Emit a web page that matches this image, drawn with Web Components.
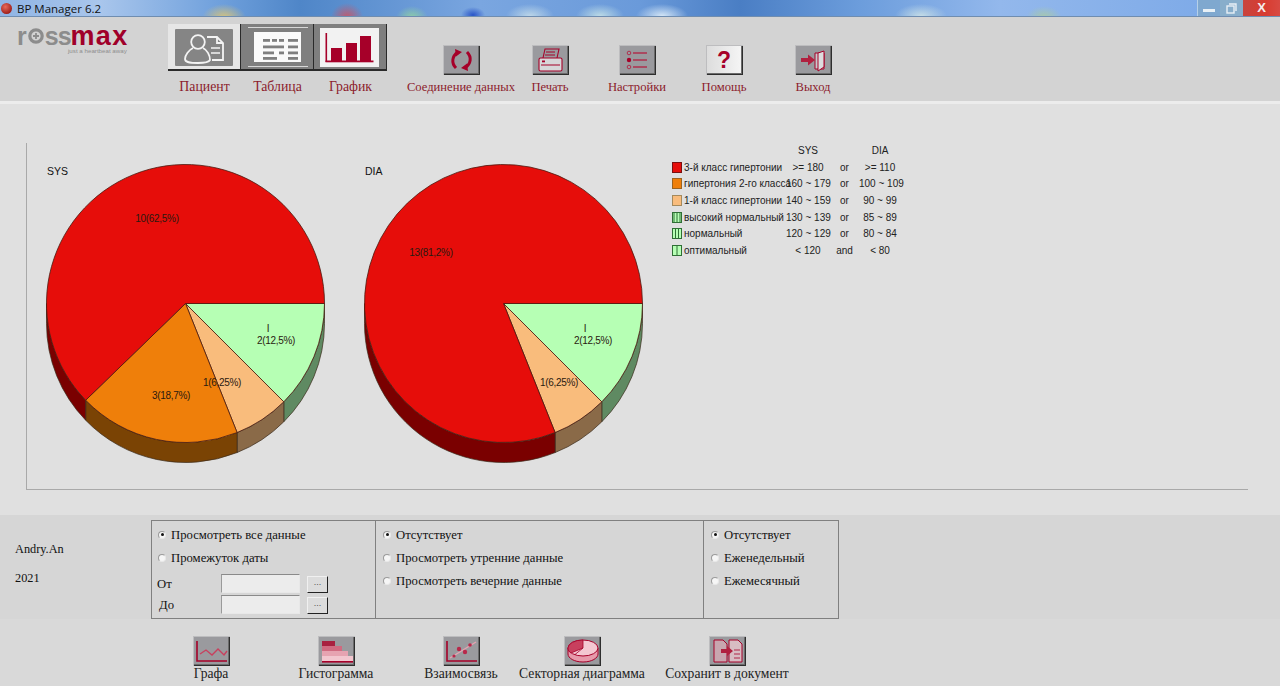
<!DOCTYPE html>
<html lang="ru">
<head>
<meta charset="utf-8">
<title>BP Manager 6.2</title>
<style>
  html, body { margin: 0; height: 100%; overflow: hidden; background: #e0e0e0; }
  bp-app { font-family: "Liberation Serif", "Times New Roman", serif; }
  .low { margin-left: 2px; }
</style>
</head>
<body>

<bp-app>
  <bp-titlebar slot="title">BP Manager 6.2</bp-titlebar>

  <bp-toolbar slot="toolbar">
    <bp-logo slot="logo"></bp-logo>

    <bp-tool big style="--w:73px">
      <svg slot="icon" viewBox="0 0 72 47" width="72" height="47">
        <rect width="72" height="47" fill="#e6e6e6"/>
        <rect x="7" y="5" width="58" height="37" rx="1" fill="#858585"/>
        <g fill="none" stroke="#f4f4f4" stroke-width="1.8">
          <circle cx="30" cy="18" r="6.8"/>
          <path d="M25 24c-4 2-8 7-8 11 0 3 3 4 13 4 7 0 11-1 12-3 0-5-3-10-7-12"/>
          <path d="M39 13h10l6 6v17H44"/>
          <path d="M49 13v6h6"/>
          <path d="M43 24h9M43 29h9" stroke-width="1.4"/>
        </g>
      </svg>
      Пациент
    </bp-tool>
    <bp-tool big style="--w:73px">
      <svg slot="icon" viewBox="0 0 72 47" width="72" height="47">
        <rect width="72" height="47" fill="#7f7f7f"/>
        <path d="M7 3.500h60M7 42.500h60" stroke="#d8d8d8" stroke-width="1"/>
        <rect x="13" y="8" width="47" height="30" fill="#fafafa"/>
        <g fill="#7f7f7f">
          <rect x="22" y="15" width="7" height="2.800"/><rect x="31" y="15" width="5" height="2.800"/><rect x="38" y="15" width="5" height="2.800"/><rect x="47" y="15" width="10" height="2.800"/>
          <rect x="22" y="21.500" width="21" height="2.800"/><rect x="47" y="21.500" width="10" height="2.800"/>
          <rect x="22" y="27.500" width="11" height="2.800"/><rect x="38" y="27.500" width="5" height="2.800"/><rect x="47" y="27.500" width="10" height="2.800"/>
          <rect x="22" y="33" width="14" height="2.800"/><rect x="47" y="33" width="10" height="2.800"/>
        </g>
      </svg>
      Таблица
    </bp-tool>
    <bp-tool big style="--w:73px">
      <svg slot="icon" viewBox="0 0 72 47" width="72" height="47">
        <rect width="72" height="47" fill="#7f7f7f"/>
        <rect x="6" y="4" width="59" height="39" fill="#f2f2f2"/>
        <g fill="#a60029">
          <rect x="11.500" y="9" width="1.600" height="29"/>
          <rect x="11.500" y="36.500" width="48" height="1.800"/>
          <rect x="17" y="24" width="11" height="13"/>
          <rect x="32" y="19" width="11" height="18"/>
          <rect x="46" y="12" width="11" height="25"/>
        </g>
      </svg>
      График
    </bp-tool>

    <bp-tool style="--w:110px;margin-left:19px">
      <svg slot="icon" viewBox="0 0 37 30" width="37" height="30">
        <g fill="none" stroke="#a60029" stroke-width="3">
          <path d="M13 23c-5-5-4-12 2-16"/>
          <path d="M24 7c5 5 4 12-2 16"/>
        </g>
        <path d="M12 4l7 3-6 4.500zM25 26l-7-3 6-4.500z" fill="#a60029"/>
      </svg>
      Соединение данных
    </bp-tool>
    <bp-tool style="--w:68px">
      <svg slot="icon" viewBox="0 0 37 30" width="37" height="30">
        <g fill="none" stroke="#a60029" stroke-width="1.100">
          <path d="M11 13l2-9h14l-2 9"/>
          <rect x="7" y="13" width="23" height="13" rx="1.500" fill="#d7d7d9"/>
          <path d="M9 20h19M14 7h9M13 10h10"/>
        </g>
        <rect x="10" y="15.500" width="3" height="1.800" fill="#a60029"/>
      </svg>
      Печать
    </bp-tool>
    <bp-tool style="--w:106px">
      <svg slot="icon" viewBox="0 0 37 30" width="37" height="30">
        <g fill="none" stroke="#b0304e" stroke-width="1.400">
          <circle cx="10" cy="8" r="1.800" stroke-width="1"/>
          <circle cx="10" cy="22" r="1.800" stroke-width="1"/>
          <path d="M14 8h14M14 15h14M14 22h14"/>
        </g>
        <circle cx="10" cy="15" r="2.200" fill="#a60029"/>
      </svg>
      Настройки
    </bp-tool>
    <bp-tool light style="--w:68px">
      <span slot="icon" style="display:block;font:bold 23px/30px 'Liberation Sans',sans-serif;color:#a60029;text-align:center">?</span>
      Помощь
    </bp-tool>
    <bp-tool style="--w:110px">
      <svg slot="icon" viewBox="0 0 37 30" width="37" height="30">
        <path d="M20 8h9v16h-9z" fill="#c9c9cc" stroke="#a60029" stroke-width="1"/>
        <path d="M23 8l6-2v16l-6 4z" fill="#dcdcde" stroke="#a60029" stroke-width="1"/>
        <path d="M6 13h7V9.500l7 5.500-7 5.500V17H6z" fill="#b0203f"/>
      </svg>
      Выход
    </bp-tool>
  </bp-toolbar>

  <bp-chart slot="chart">
    <bp-pie name="SYS" slices='[
      {"deg":45,"fill":"#b6ffb4","side":"#5f8a62"},
      {"deg":23.2,"fill":"#f9bc7c","side":"#8a6a48"},
      {"deg":67.7,"fill":"#ef7f0a","side":"#7a4304"},
      {"deg":224.1,"fill":"#e60d0a","side":"#7a0000"}]'
      labels='[[130,75,"10(62,5%)"],[144,252,"3(18,7%)"],[195,239,"1(6,25%)"],[241,185,"I"],[249,197,"2(12,5%)"]]'></bp-pie>
    <bp-pie name="DIA" slices='[
      {"deg":45,"fill":"#b6ffb4","side":"#5f8a62"},
      {"deg":23.2,"fill":"#f9bc7c","side":"#8a6a48"},
      {"deg":291.8,"fill":"#e60d0a","side":"#7a0000"}]'
      labels='[[86,109,"13(81,2%)"],[214,239,"1(6,25%)"],[240,185,"I"],[248,197,"2(12,5%)"]]'></bp-pie>
    <bp-legend>
      <bp-legend-row sys="SYS" dia="DIA"></bp-legend-row>
      <bp-legend-row fill="#e60d0a" edge="#7a1010" sys="&gt;= 180" op="or" dia="&gt;= 110">3-й класс гипертонии</bp-legend-row>
      <bp-legend-row fill="#ef7f0a" edge="#9c6320" sys="160 ~ 179" op="or" dia="100 ~ 109">гипертония 2-го класса</bp-legend-row>
      <bp-legend-row fill="#f9bc7c" edge="#a58a5c" sys="140 ~ 159" op="or" dia="90 ~ 99">1-й класс гипертонии</bp-legend-row>
      <bp-legend-row fill="#b6ffb4" edge="#2f6f35" bars="3" sys="130 ~ 139" op="or" dia="85 ~ 89">высокий нормальный</bp-legend-row>
      <bp-legend-row fill="#b6ffb4" edge="#2f6f35" bars="2" sys="120 ~ 129" op="or" dia="80 ~ 84">нормальный</bp-legend-row>
      <bp-legend-row fill="#b6ffb4" edge="#2f6f35" bars="1" sys="&lt; 120" op="and" dia="&lt; 80">оптимальный</bp-legend-row>
    </bp-legend>
  </bp-chart>

  <bp-filters slot="filters">
    <span slot="user">Andry.An</span>
    <span slot="year">2021</span>
    <bp-group style="--w:224px;--pad:6px" slot="range">
      <bp-radio checked>Просмотреть все данные</bp-radio>
      <bp-radio>Промежуток даты</bp-radio>
      <bp-date-row first>От</bp-date-row>
      <bp-date-row><span class="low">До</span></bp-date-row>
    </bp-group>
    <bp-group style="--w:328px" slot="time">
      <bp-radio checked>Отсутствует</bp-radio>
      <bp-radio>Просмотреть утренние данные</bp-radio>
      <bp-radio>Просмотреть вечерние данные</bp-radio>
    </bp-group>
    <bp-group style="--w:134px" slot="period">
      <bp-radio checked>Отсутствует</bp-radio>
      <bp-radio>Еженедельный</bp-radio>
      <bp-radio>Ежемесячный</bp-radio>
    </bp-group>
  </bp-filters>

  <bp-actions slot="actions">
    <bp-tool action style="--w:124px">
      <svg slot="icon" viewBox="0 0 37 30" width="37" height="30">
        <path d="M4 5v20h30" fill="none" stroke="#a60029" stroke-width="1.600"/>
        <path d="M7 18l6-4 6 5 6-6 6 6 3-4" fill="none" stroke="#c8405e" stroke-width="1.400"/>
      </svg>
      Графа
    </bp-tool>
    <bp-tool action style="--w:126px">
      <svg slot="icon" viewBox="0 0 37 30" width="37" height="30">
        <rect x="4" y="5" width="13" height="5" fill="#a8203f"/>
        <rect x="4" y="10" width="20" height="5" fill="#d06a80"/>
        <rect x="4" y="15" width="26" height="5" fill="#e6a3b1"/>
        <rect x="4" y="20" width="31" height="5" fill="#f2c6cf"/>
        <rect x="4" y="25" width="31" height="1.600" fill="#a60029"/>
      </svg>
      Гистограмма
    </bp-tool>
    <bp-tool action style="--w:124px">
      <svg slot="icon" viewBox="0 0 37 30" width="37" height="30">
        <path d="M4 5v20h30" fill="none" stroke="#a60029" stroke-width="1.600"/>
        <path d="M7 22L33 6" stroke="#e6a3b1" stroke-width="1.400"/>
        <g fill="#b8284a"><circle cx="11" cy="20" r="1.600"/><circle cx="16" cy="13" r="2.200"/><circle cx="22" cy="16" r="2.200"/><circle cx="27" cy="9" r="1.800"/></g>
      </svg>
      Взаимосвязь
    </bp-tool>
    <bp-tool action style="--w:118px">
      <svg slot="icon" viewBox="0 0 37 30" width="37" height="30">
        <path d="M4 12v6c0 4 6 8 15 8s15-4 15-8v-6z" fill="#e79aab" stroke="#a60029" stroke-width="1"/>
        <ellipse cx="19" cy="12" rx="15" ry="8" fill="#f4c8d2" stroke="#a60029" stroke-width="1"/>
        <path d="M19 12V4a15 8 0 0 0-15 8c0 2 1 4 3 5z" fill="#c8405e" stroke="#a60029" stroke-width=".8"/>
        <path d="M19 12l-8 6.500" stroke="#a60029" stroke-width=".8"/>
      </svg>
      Секторная диаграмма
    </bp-tool>
    <bp-tool action style="--w:172px">
      <svg slot="icon" viewBox="0 0 37 30" width="37" height="30">
        <path d="M5 4h9l4 4v18H5z" fill="#c8a6af" stroke="#a60029" stroke-width="1"/>
        <path d="M20 4h9l4 4v18H20z" fill="#d8bcc3" stroke="#a60029" stroke-width="1"/>
        <path d="M25 14h6M25 18h6M25 22h6" stroke="#a60029" stroke-width=".8"/>
        <path d="M12 13h6v-3l6 5-6 5v-3h-6z" fill="#b0203f"/>
      </svg>
      Сохранит в документ
    </bp-tool>
  </bp-actions>
</bp-app>

<script>
// Small helper so that each class stays short
function shadow(el, html) {
  el.attachShadow({mode: 'open'}).innerHTML = html;
}

// Page shell: stacks the bars from top to bottom
class BpApp extends HTMLElement {
  constructor() {
    super();
    shadow(this, `
      <style>
        :host { display: flex; flex-direction: column; height: 686px; width: 1280px; }
        .band { height: 3px; background: #ececec; flex: none; }
      </style>
      <slot name="title"></slot>
      <slot name="toolbar"></slot>
      <div class="band"></div>
      <slot name="chart"></slot>
      <slot name="filters"></slot>
      <slot name="actions"></slot>`);
  }
}

class BpTitlebar extends HTMLElement {
  constructor() {
    super();
    shadow(this, `
      <style>
        :host {
          display: flex; align-items: center; flex: none; height: 16px;
          border-bottom: 1px solid #6f8db0;
          font: 11.5px "Open Sans", sans-serif; color: #111;
          background:
            radial-gradient(ellipse 22px 14px at 224px 18px, #d9c479, transparent),
            radial-gradient(ellipse 16px 14px at 347px 17px, #c05a6e, transparent),
            radial-gradient(ellipse 16px 12px at 412px 18px, #8fcfa6, transparent),
            radial-gradient(ellipse 12px 8px at 473px 15px, #2a55c8, transparent),
            radial-gradient(ellipse 24px 12px at 530px 16px, #bcd6e8, transparent),
            radial-gradient(ellipse 24px 12px at 600px 16px, #bcdbe6, transparent),
            radial-gradient(ellipse 26px 12px at 662px 16px, #d4e6f6, transparent),
            radial-gradient(ellipse 26px 12px at 921px 16px, #c4dce6, transparent),
            radial-gradient(ellipse 18px 12px at 1044px 18px, #a9c9a8, transparent),
            linear-gradient(90deg, #8fb4e4 0, #a9c6ec 100px, #6fa0dc 220px, #4f86c8 300px, #7aa6e0 480px,
              #6a9ada 640px, #4a7ec4 740px, #6c9ddc 860px, #93b8ec 1000px, #7fabe8 1197px);
        }
        .ball { width: 11px; height: 11px; margin: 0 5px 0 1px; border-radius: 50%; background: radial-gradient(circle at 40% 35%, #e86a5a, #9c1c18 75%); flex: none; }
        .text { flex: 1; }
        .btn { height: 16px; display: flex; align-items: center; justify-content: center; flex: none; box-sizing: border-box; }
        .min { width: 23px; background: #7fa8cf; border-left: 1px solid #b6d0e8; }
        .min i { width: 12px; height: 3px; background: #e8f0f6; margin-top: 5px; }
        .res { width: 23px; background: #88aecb; }
        .close { width: 37px; background: linear-gradient(90deg, #c8443e, #d83c30 60%, #d84a42); color: #f4ecec; font: bold 13px/16px "Liberation Sans", sans-serif; }
      </style>
      <span class="ball"></span>
      <span class="text"><slot></slot></span>
      <span class="btn min"><i></i></span>
      <span class="btn res">
        <svg width="11" height="11" viewBox="0 0 11 11" fill="none" stroke="#e8f0f6" stroke-width="1.400"><rect x="1" y="3" width="7" height="7"/><path d="M3 1h7v7"/></svg>
      </span>
      <span class="btn close">X</span>`);
  }
}

// Top bar with the logo and the tool buttons
class BpToolbar extends HTMLElement {
  constructor() {
    super();
    shadow(this, `
      <style>
        :host { display: flex; flex: none; height: 84px; background: #d3d3d3; }
        ::slotted([slot=logo]) { width: 168px; flex: none; }
      </style>
      <slot name="logo"></slot>
      <slot></slot>`);
  }
}

class BpLogo extends HTMLElement {
  constructor() {
    super();
    shadow(this, `
      <style>
        :host { display: block; box-sizing: border-box; padding: 8px 0 0 17px; font-family: "Liberation Sans", Arial, sans-serif; }
        .word { display: flex; align-items: baseline; height: 22px; width: 112px; font-size: 25px; font-weight: bold; line-height: 22px; color: #8c8c8c; letter-spacing: -1px; }
        .word svg { margin: 0 1px 0 2px; flex: none; align-self: center; }
        .max { color: #a0002a; font-size: 27px; letter-spacing: 1.300px; }
        .tag { margin: 0 0 0 51px; font-size: 6.200px; line-height: 7px; color: #8e8e8e; white-space: nowrap; }
      </style>
      <div class="word">r<svg width="16" height="16" viewBox="0 0 16 16"><circle cx="8" cy="8" r="6.200" fill="none" stroke="#8c8c8c" stroke-width="3.200"/><path d="M8 5v6M5 8h6" stroke="#8c8c8c" stroke-width="1.800"/></svg>ss<span class="max">max</span></div>
      <div class="tag">just a heartbeat away</div>`);
  }
}

// One icon button with its caption; --w sets the width of the cell
class BpTool extends HTMLElement {
  constructor() {
    super();
    shadow(this, `
      <style>
        :host {
          display: flex; flex-direction: column; align-items: center; justify-content: flex-end;
          width: var(--w); flex: none; box-sizing: border-box; padding-bottom: 7px;
          font-size: 12.600px; line-height: 14px; color: #8c1c2c; white-space: nowrap;
        }
        .btn {
          width: 37px; height: 30px; margin-bottom: 5px; position: relative; flex: none;
          background: #9a9a9e; overflow: hidden;
          box-shadow: inset 1px 1px 0 #bdbdbf, inset -1px -1px 0 #2e2e2e, inset -2px -2px 0 #6b6b6b;
        }
        :host([light]) .btn { background: linear-gradient(90deg, #dcdcdc, #f6f6f6); }
        :host([big]) { font-size: 13.800px; }
        :host([big]) .btn { width: 72px; margin-bottom: 9px; background: none; box-shadow: none; border-bottom: 2px solid #2a2a2a; border-right: 1px solid #2a2a2a; box-sizing: content-box; height: 45px; }
        :host([action]) { padding-bottom: 5px; color: #222; font-size: 13.600px; }
        :host([action]) .btn { margin-bottom: 1px; }
      </style>
      <div class="btn"><slot name="icon"></slot></div>
      <div><slot></slot></div>`);
  }
}

// Frame of the chart area: left and bottom rule only
class BpChart extends HTMLElement {
  constructor() {
    super();
    shadow(this, `
      <style>
        :host { display: block; flex: none; height: 411px; background: #e0e0e0; box-sizing: border-box; padding: 39px 32px 25px 26px; }
        .frame { display: flex; height: 346px; border-left: 1px solid #a9a9a9; border-bottom: 1px solid #a9a9a9; }
      </style>
      <div class="frame"><slot></slot></div>`);
  }
}

// 3D pie: slices go clockwise from 3 o'clock, in degrees
class BpPie extends HTMLElement {
  constructor() {
    super();
    const cx = 158.5, cy = 160.5, r = 139, depth = 20;
    const pt = (a, dy = 0) => {
      const t = a * Math.PI / 180;
      return [(cx + r * Math.cos(t)).toFixed(2), (cy + r * Math.sin(t) + dy).toFixed(2)].join(' ');
    };
    const slices = JSON.parse(this.getAttribute('slices'));
    const labels = JSON.parse(this.getAttribute('labels'));
    let sides = '', tops = '', a = 0;
    for (const s of slices) {
      const end = a + s.deg;
      // wall: only the part of the rim that faces down
      if (a < 180) {
        const e = Math.min(end, 180);
        sides += `<path d="M${pt(a)} A${r} ${r} 0 0 1 ${pt(e)} L${pt(e, depth)} A${r} ${r} 0 0 0 ${pt(a, depth)} Z" fill="${s.side}" stroke="#3a2a1a" stroke-width=".7"/>`;
      }
      const large = s.deg > 180 ? 1 : 0;
      tops += `<path d="M${cx} ${cy} L${pt(a)} A${r} ${r} 0 ${large} 1 ${pt(end)} Z" fill="${s.fill}" stroke="#4a1a10" stroke-width=".8"/>`;
      a = end;
    }
    const texts = labels.map(l => `<text x="${l[0]}" y="${l[1] + 3.5}" text-anchor="middle">${l[2]}</text>`).join('');
    shadow(this, `
      <style>
        :host { display: block; width: 318px; height: 346px; flex: none; }
        svg { display: block; font: 10px "Liberation Sans", Arial, sans-serif; }
        text { fill: #2a1a10; letter-spacing: -.3px; }
        .name { fill: #111; font-size: 10.500px; letter-spacing: 0; }
      </style>
      <svg width="318" height="346" viewBox="0 0 318 346">
        <text class="name" x="20" y="32">${this.getAttribute('name')}</text>
        ${sides}${tops}${texts}
      </svg>`);
  }
}

class BpLegend extends HTMLElement {
  constructor() {
    super();
    shadow(this, `
      <style>
        :host { display: block; margin: -1px 0 0 9px; font: 10px "Liberation Sans", Arial, sans-serif; color: #222; }
      </style>
      <slot></slot>`);
  }
}

class BpLegendRow extends HTMLElement {
  constructor() {
    super();
    const fill = this.getAttribute('fill');
    const edge = this.getAttribute('edge');
    const bars = +this.getAttribute('bars');
    let lines = '';
    for (let i = 0; i < bars; i++) {
      const x = 5 - (bars - 1) * 1.5 + i * 3;
      lines += `<path d="M${x} 1v9" stroke="${edge}" stroke-width="1"/>`;
    }
    const swatch = fill ? `<svg width="10" height="11" viewBox="0 0 10 11"><rect x=".5" y=".5" width="9" height="10" fill="${fill}" stroke="${edge}"/>${lines}</svg>` : '';
    shadow(this, `
      <style>
        :host { display: grid; grid-template-columns: 114px 44px 29px 42px; height: 16.700px; align-items: center; white-space: nowrap; }
        .name { display: flex; align-items: center; gap: 2px; width: 114px; }
        .name svg { flex: none; }
        .c { text-align: center; position: relative; }
      </style>
      <div class="name">${swatch}<span><slot></slot></span></div>
      <div class="c">${this.getAttribute('sys') || ''}</div>
      <div class="c">${this.getAttribute('op') || ''}</div>
      <div class="c">${this.getAttribute('dia') || ''}</div>`);
  }
}

// Row with the user name and the three radio groups
class BpFilters extends HTMLElement {
  constructor() {
    super();
    shadow(this, `
      <style>
        :host { display: flex; flex: none; height: 104px; background: #d6d6d6; font-size: 12.700px; line-height: 14px; color: #111; box-sizing: border-box; padding-top: 5px; }
        .who { width: 151px; flex: none; box-sizing: border-box; padding: 22px 0 0 15px; display: flex; flex-direction: column; gap: 15px; font-size: 12.300px; }
        .box { display: flex; height: 99px; box-sizing: border-box; border: 1px solid #808080; }
      </style>
      <div class="who"><slot name="user"></slot><slot name="year"></slot></div>
      <div class="box">
        <slot name="range"></slot>
        <slot name="time"></slot>
        <slot name="period"></slot>
      </div>`);
  }
}

class BpGroup extends HTMLElement {
  constructor() {
    super();
    shadow(this, `
      <style>
        :host { display: block; width: var(--w); box-sizing: border-box; padding: 2px 0 0 var(--pad, 7px); }
        :host(:not(:last-child)) { border-right: 1px solid #808080; }
      </style>
      <slot></slot>`);
  }
}

class BpRadio extends HTMLElement {
  constructor() {
    super();
    shadow(this, `
      <style>
        :host { display: flex; align-items: center; gap: 5px; height: 23px; white-space: nowrap; }
        .dot { width: 8px; height: 8px; flex: none; box-sizing: border-box; border-radius: 50%; background: #f6f6f6; border: 1px solid; border-color: #9a9a9a #e8e8e8 #e8e8e8 #9a9a9a; position: relative; }
        :host([checked]) .dot::after { content: ""; position: absolute; left: 1.500px; top: 1.500px; width: 3px; height: 3px; border-radius: 50%; background: #111; }
      </style>
      <span class="dot"></span><span><slot></slot></span>`);
  }
}

class BpDateRow extends HTMLElement {
  constructor() {
    super();
    shadow(this, `
      <style>
        :host { display: flex; height: 19px; margin: 0 0 2px -1px; align-items: center; }
        :host([first]) { margin-top: 5px; }
        .label { width: 64px; flex: none; }
        .field { width: 79px; height: 19px; box-sizing: border-box; background: #ececec; border: 1px solid; border-color: #8a8a8a #e8e8e8 #e8e8e8 #9a9a9a; flex: none; }
        .more { width: 21px; height: 17px; margin: 1px 0 0 7px; box-sizing: border-box; background: #dcdcdc; border: 1px solid; border-color: #f0f0f0 #222 #222 #f0f0f0; font: 9px/11px "Liberation Sans", sans-serif; text-align: center; color: #555; flex: none; }
      </style>
      <span class="label"><slot></slot></span>
      <span class="field"></span>
      <span class="more">...</span>`);
  }
}

class BpActions extends HTMLElement {
  constructor() {
    super();
    shadow(this, `
      <style>
        :host { display: flex; flex: 1; background: #d9d9d9; box-sizing: border-box; padding-left: 149px; }
      </style>
      <slot></slot>`);
  }
}

const parts = {
  'bp-app': BpApp, 'bp-titlebar': BpTitlebar, 'bp-toolbar': BpToolbar, 'bp-logo': BpLogo,
  'bp-tool': BpTool, 'bp-chart': BpChart, 'bp-pie': BpPie, 'bp-legend': BpLegend,
  'bp-legend-row': BpLegendRow, 'bp-filters': BpFilters, 'bp-group': BpGroup,
  'bp-radio': BpRadio, 'bp-date-row': BpDateRow, 'bp-actions': BpActions
};
for (const name in parts) customElements.define(name, parts[name]);
</script>
</body>
</html>
